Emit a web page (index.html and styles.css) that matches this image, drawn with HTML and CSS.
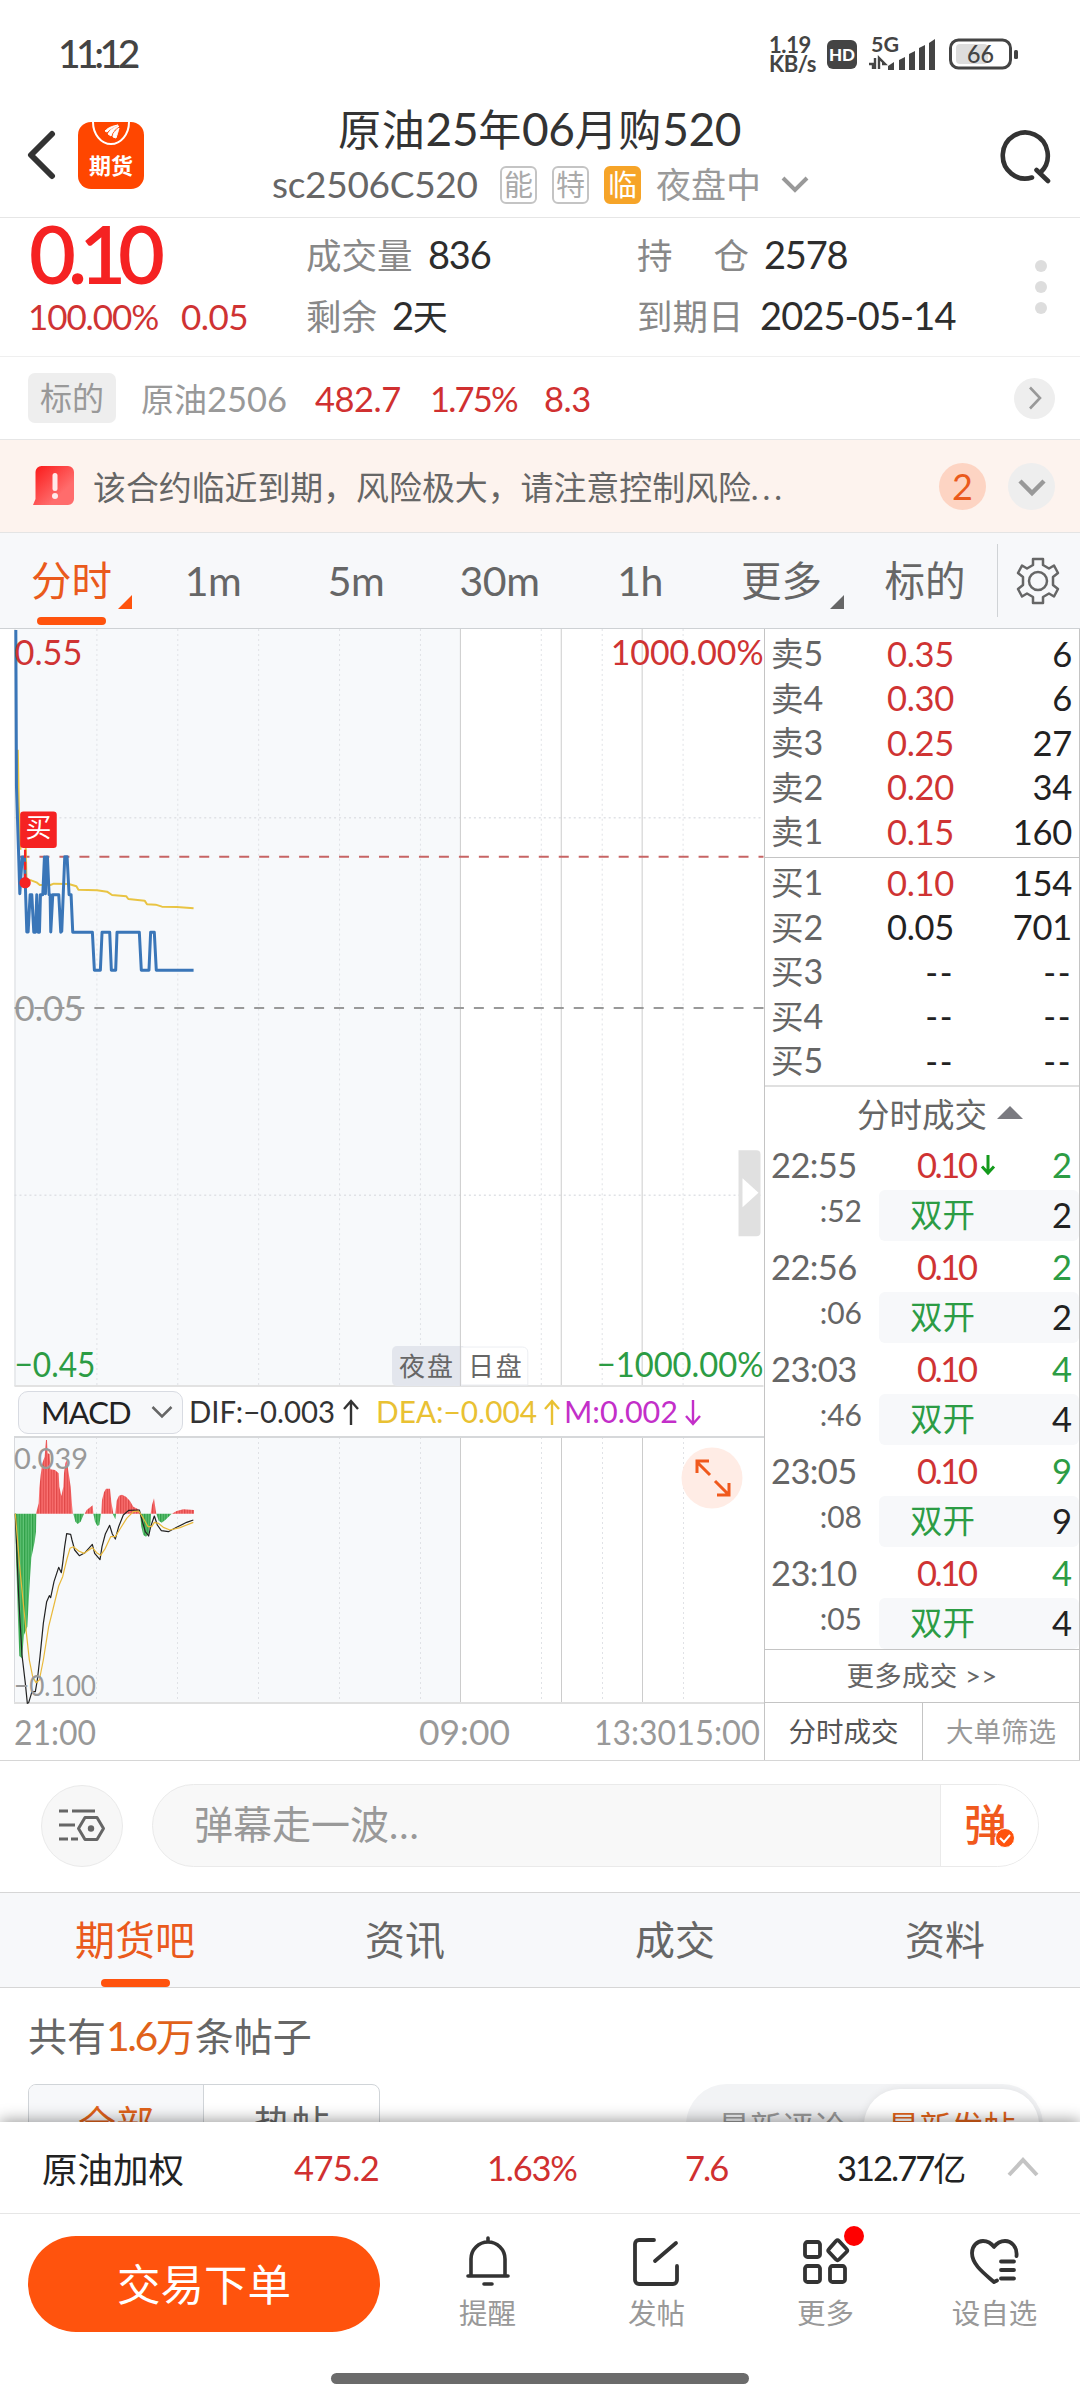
FILE: index.html
```html
<!DOCTYPE html>
<html lang="zh-CN">
<head>
<meta charset="utf-8">
<title>原油25年06月购520</title>
<link rel="stylesheet" href="styles.css">
</head>
<body>
<div class="app">

  <div class="status">
    <span class="clock">11:12</span>
    <span class="speed"><span>1.19</span><span>KB/s</span></span>
    <span class="hd">HD</span>
    <svg class="signal" width="68" height="36" viewBox="0 0 68 36">
      <text x="2" y="17" class="g5" textLength="28" lengthAdjust="spacingAndGlyphs">5G</text>
      <path d="M0 29h4v5M6 34V23M10 34V23l6 6h-3" fill="none" stroke="#444" stroke-width="2.4"/>
      <g fill="#444"><path d="M19 35v-4l6-4v8z"/><path d="M30 35V25l6-3v13z"/><path d="M40 35V19l6-3v19z"/><path d="M50 35V13l6-3v25z"/><path d="M60 35V8l6-4v31z"/></g>
    </svg>
    <svg class="battery" width="72" height="34" viewBox="0 0 72 34">
      <rect x="7" y="6" width="32" height="20" rx="4" fill="#ddd"/>
      <rect x="1.5" y="2" width="60" height="28" rx="8" fill="none" stroke="#444" stroke-width="3"/>
      <rect x="65" y="12" width="4" height="9" rx="1.5" fill="#444"/>
      <text x="18" y="24.500" class="batt" textLength="27" lengthAdjust="spacingAndGlyphs">66</text>
    </svg>
  </div>

  <header class="header">
    <svg class="back" width="30" height="50" viewBox="0 0 30 50"><path d="M25 4L4 25l21 21" fill="none" stroke="#333" stroke-width="6" stroke-linecap="round" stroke-linejoin="round"/></svg>
    <div class="logo">
      <svg width="38" height="24" viewBox="0 0 38 24"><path d="M1 0a18 22 0 0 0 36 0" fill="none" stroke="#fff" stroke-width="2"/><path d="M13 9c4-4 8-5 13-6-5 2-8 4-11 7zM16 12c2-4 6-7 11-8-4 3-7 6-8 10zM21 15c0-4 3-7 6-9-1 4-2 7-3 10z" fill="#fff" stroke="#fff"/></svg>
      <span>期货</span>
    </div>
    <div class="titles">
      <div class="title"><i>原油</i>25<i>年</i>06<i>月购</i>520</div>
      <div class="subtitle">
        <span class="code">sc2506C520</span>
        <span class="badge">能</span><span class="badge">特</span><span class="badge hot">临</span>
        <span class="phase">夜盘中</span>
        <svg width="28" height="18" viewBox="0 0 28 18"><path d="M2 2l12 12L26 2" fill="none" stroke="#999" stroke-width="4"/></svg>
      </div>
    </div>
    <svg class="search" width="54" height="54" viewBox="0 0 54 54"><path d="M33 47.500A22.500 23 0 1 1 42 42M37.500 40L49 51" fill="none" stroke="#333" stroke-width="4.600" stroke-linecap="round" stroke-linejoin="round"/></svg>
  </header>

  <section class="quote">
    <div class="last">
      <div class="price">0.10</div>
      <div class="change"><span>100.00%</span><span>0.05</span></div>
    </div>
    <dl class="stat s1"><dt>成交量</dt><dd>836</dd></dl>
    <dl class="stat s2"><dt class="wide"><span>持</span><span>仓</span></dt><dd>2578</dd></dl>
    <dl class="stat s3"><dt>剩余</dt><dd>2<i>天</i></dd></dl>
    <dl class="stat s4"><dt>到期日</dt><dd>2025-05-14</dd></dl>
    <div class="dots"><b></b><b></b><b></b></div>
  </section>

  <section class="underlying">
    <span class="tag">标的</span>
    <span class="uname">原油<em>2506</em></span>
    <span class="u u1">482.7</span><span class="u u2">1.75%</span><span class="u u3">8.3</span>
    <span class="go"><svg width="14" height="24" viewBox="0 0 14 24"><path d="M2 1.500l10 10.500L2 22.500" fill="none" stroke="#999" stroke-width="2.600"/></svg></span>
  </section>

  <section class="notice">
    <svg width="42" height="42" viewBox="0 0 42 42"><defs><linearGradient id="warn" x1="0" y1="0" x2="1" y2="1"><stop offset="0.100" stop-color="#fb2323"/><stop offset="0.700" stop-color="#ff6c6c"/></linearGradient></defs><path d="M9 1h26a6 6 0 0 1 6 6v27a6 6 0 0 1-6 6H0l2.500-6V7a6 6 0 0 1 6-6z" fill="url(#warn)"/><rect x="19.500" y="8" width="5" height="18" rx="2.500" fill="#ffeaea"/><circle cx="22" cy="31" r="3" fill="#ffeaea"/></svg>
    <span class="msg">该合约临近到期，风险极大，请注意控制风险<em>...</em></span>
    <span class="count">2</span>
    <span class="fold"><svg width="28" height="18" viewBox="0 0 28 18"><path d="M2 2l12 12L26 2" fill="none" stroke="#999" stroke-width="4.500"/></svg></span>
  </section>

  <nav class="periods">
    <span class="p p1 active">分时</span><span class="p p2">1m</span><span class="p p3">5m</span><span class="p p4">30m</span><span class="p p5">1h</span><span class="p p6">更多</span><span class="p p7">标的</span>
    <span class="gear"><svg width="44" height="48" viewBox="0 0 44 48"><g fill="none" stroke="#666" stroke-width="2.500" stroke-linejoin="round"><path d="M17 2h10v6l6 3.500 5-3 4 7.500-5 4v8l5 4-4 7.500-5-3-6 3.500v6H17v-6l-6-3.500-5 3L2 32l5-4v-8l-5-4 4-7.500 5 3L17 8z"/><circle cx="22" cy="24" r="9"/></g></svg></span>
  </nav>

  <main class="board">
    <div class="charts">
      <div class="plot">
        <svg width="764" height="760" viewBox="0 629 764 760">
          <rect x="14" y="629" width="446" height="758" fill="#f7f9fb"/>
          <g class="dot"><path d="M96.500 629v758M177.500 629v758M258.500 629v758M339.500 629v758M420.500 629v758M541.500 629v758M602.500 629v758M683.500 629v758"/><path d="M14 818H764M14 1196H764" stroke-width="1.600"/></g>
          <path d="M14.500 629v758" stroke="#d8dade"/>
          <path d="M460.500 629v758M561.500 629v758M642.500 629v758" stroke="#ccc"/>
          <path d="M14 1387H764" stroke="#e2e2e2" stroke-width="2"/>
          <path d="M19 857H764" stroke="#c76464" stroke-width="2" stroke-dasharray="10 10"/>
          <path d="M14 1008.500H764" stroke="#999" stroke-width="2" stroke-dasharray="10 10"/>
          <g transform="translate(0 620) scale(.33333)" fill="none" stroke-linejoin="round">
            <path d="M52 390L55 560 60 690M74 600L78 780 92 782 108 788 118 796 150 796 160 792 205 793 228 800 234 810 290 812 320 816 335 826 378 830 384 838 433 843 440 854 466 855 485 861 530 862 580 866" stroke="#e9c443" stroke-width="6"/>
            <path d="M46 30L48 500 54 690 58 822 65 712 72 712 79 937 83 937 89 825 94 825 100 938 105 938 109 825 113 938 117 938 120 825 127 825 132 712 135 822 137 712 141 712 146 825 149 825 151 937 157 825 175 825 181 938 184 935 193 711 200 711 206 825 212 825 217 938 276 938 282 1052 300 1052 305 938 328 938 333 1052 346 1052 350 938 417 938 423 1052 446 1052 451 938 462 938 468 1052 580 1052" stroke="#3a76b8" stroke-width="9"/>
            <path d="M74 690V780" stroke="#f52222" stroke-width="7" stroke-dasharray="24 12"/>
            <circle cx="74" cy="789" r="17" fill="#f52222"/>
            <rect x="59" y="575" width="110" height="110" rx="10" fill="#f52222"/>
          </g>
          <text x="25" y="837" class="buy">买</text>
          <text class="ax red" x="14" y="665" textLength="68" lengthAdjust="spacingAndGlyphs">0.55</text>
          <text class="ax red" x="611" y="665" textLength="153" lengthAdjust="spacingAndGlyphs">1000.00%</text>
          <text class="ax gray" x="14" y="1021.500" textLength="69" lengthAdjust="spacingAndGlyphs">0.05</text>
          <rect x="392" y="1347" width="74" height="40" rx="5" fill="#e3e6ed"/>
          <path d="M461 1348h62a5 5 0 0 1 5 5v33h-67z" fill="#fff" stroke="#eceef2"/><path d="M460.500 1347v40" stroke="#ccc"/>
          <text class="ax green" x="14" y="1378.500" textLength="81" lengthAdjust="spacingAndGlyphs">−0.45</text>
          <text class="ax green" x="597" y="1378.500" textLength="167" lengthAdjust="spacingAndGlyphs">−1000.00%</text>
          <text class="sess" x="399" y="1377" textLength="54">夜盘</text>
          <text class="sess" x="468" y="1377" textLength="54">日盘</text>
          <path d="M739 1151h18q4 0 4 4v78q0 4-4 4h-18z" fill="#e0e0e0"/><path d="M743 1179l16 14.500-16 14.500z" fill="#fff"/>
        </svg>
      </div>
      <div class="indicator">
        <span class="macd">MACD<svg width="22" height="14" viewBox="0 0 22 14"><path d="M1.500 2L11 11.500 20.500 2" fill="none" stroke="#666" stroke-width="2.500"/></svg></span>
        <svg class="vals" width="520" height="48" viewBox="188 1388 520 48">
          <g fill="#333" stroke="#333"><text x="189" y="1423" textLength="146" lengthAdjust="spacingAndGlyphs">DIF:−0.003</text><path d="M351 1425v-24M344 1409l7-8 7 8"/></g>
          <g fill="#e9c133" stroke="#e9c133"><text x="376" y="1423" textLength="161" lengthAdjust="spacingAndGlyphs">DEA:−0.004</text><path d="M552 1425v-24M545 1409l7-8 7 8"/></g>
          <g fill="#c32fc9" stroke="#c32fc9"><text x="564" y="1423" textLength="114" lengthAdjust="spacingAndGlyphs">M:0.002</text><path d="M693 1400v24M686 1416l7 8 7-8"/></g>
        </svg>
      </div>
      <div class="plot">
        <svg width="764" height="268" viewBox="0 1436 764 268">
          <defs>
            <pattern id="up" width="8" height="8" patternUnits="userSpaceOnUse"><rect width="8" height="8" fill="#fb7474"/><rect width="4" height="8" fill="#e04848"/></pattern>
            <pattern id="dn" width="8" height="8" patternUnits="userSpaceOnUse"><rect width="8" height="8" fill="#62c476"/><rect width="4" height="8" fill="#2fa048"/></pattern>
          </defs>
          <rect x="14" y="1437" width="446" height="266" fill="#f7f9fb"/>
          <path class="dot" d="M96.500 1437v266M177.500 1437v266M258.500 1437v266M339.500 1437v266M420.500 1437v266M541.500 1437v266M602.500 1437v266M683.500 1437v266"/>
          <path d="M14.500 1437v266" stroke="#d8dade"/>
          <path d="M460.500 1437v266M561.500 1437v266M642.500 1437v266" stroke="#ccc"/>
          <path d="M14 1437H764" stroke="#d6d8da" stroke-width="2"/><path d="M14 1703H764" stroke="#e0e0e0" stroke-width="2"/>
          <g transform="translate(0 1330) scale(.33333)">
            <path fill="url(#up)" d="M108 551L116 520 118 475 122 435 127 400 134 380 138 330 141 330 143 370 149 372 151 418 165 420 176 430 178 470 184 498 190 470 192 430 196 400 200 390 206 430 212 470 218 551zM254 551L260 540 278 526 280 551zM304 551L306 510 312 487 318 476 330 476 334 516 340 551zM346 551L350 512 357 497 366 494 378 500 390 513 400 530 415 538 422 551zM452 551L456 525 462 505 467 540 469 551zM516 551L530 543 550 538 582 540 582 551z"/>
            <path fill="url(#dn)" d="M44 551L50 735 54 870 58 978 66 985 72 915 82 890 86 815 90 745 94 683 100 655 104 635 108 605 109 551zM220 551L226 575 233 582 242 575 252 551zM280 551L285 575 292 588 298 585 303 551zM338 551L346 568 348 551zM420 551L424 590 430 615 438 620 446 612 452 575 453 551zM469 551L476 572 485 578 496 570 515 551z"/>
            <g fill="none" stroke-width="3.600" stroke-linejoin="round">
              <path stroke="#222" d="M46 551L56 800 66 975 76 1060 82 1120 86 1118 96 1085 106 1085 112 1050 120 980 130 880 140 815 148 797 152 803 162 755 176 712 184 728 188 700 194 650 200 611 212 613 216 630 224 660 238 677 255 668 277 643 284 670 300 689 306 650 316 612 329 586 337 612 346 627 356 590 370 555 386 541 418 540 426 570 436 605 446 618 452 590 463 558 472 585 484 602 505 605 530 592 560 577 580 570"/>
              <path stroke="#e9b93a" d="M46 551L60 720 76 880 88 990 98 1040 108 1058 118 1050 130 990 146 890 162 825 176 768 188 740 200 690 210 655 220 650 236 663 252 670 277 653 290 668 302 676 316 655 332 620 346 620 360 597 380 565 400 545 416 543 430 565 444 590 455 590 463 577 475 580 490 592 510 600 540 593 580 577"/>
            </g>
          </g>
          <text class="ax small gray" x="14" y="1469" textLength="74" lengthAdjust="spacingAndGlyphs">0.039</text>
          <text class="ax small gray" x="14" y="1696" textLength="82" lengthAdjust="spacingAndGlyphs">−0.100</text>
          <circle cx="712" cy="1478" r="30.500" fill="#ffece5"/>
          <path d="M710 1475L697 1462M709 1461h-12v12M715 1481l14 14M717 1495h12v-12" fill="none" stroke="#f0591d" stroke-width="3"/>
        </svg>
      </div>
      <svg class="times" width="764" height="56" viewBox="0 1704 764 56">
        <text class="ax gray" x="14" y="1744.500" textLength="82" lengthAdjust="spacingAndGlyphs">21:00</text>
        <text class="ax gray" x="419" y="1744.500" textLength="91" lengthAdjust="spacingAndGlyphs">09:00</text>
        <text class="ax gray" x="594" y="1744.500" textLength="82" lengthAdjust="spacingAndGlyphs">13:30</text>
        <text class="ax gray" x="676" y="1744.500" textLength="84" lengthAdjust="spacingAndGlyphs">15:00</text>
      </svg>
    </div>

    <aside class="depth">
      <div class="book asks">
        <div class="lv"><span>卖<em>5</em></span><b class="up">0.35</b><b>6</b></div>
        <div class="lv"><span>卖<em>4</em></span><b class="up">0.30</b><b>6</b></div>
        <div class="lv"><span>卖<em>3</em></span><b class="up">0.25</b><b>27</b></div>
        <div class="lv"><span>卖<em>2</em></span><b class="up">0.20</b><b>34</b></div>
        <div class="lv"><span>卖<em>1</em></span><b class="up">0.15</b><b>160</b></div>
      </div>
      <div class="book bids">
        <div class="lv"><span>买<em>1</em></span><b class="up">0.10</b><b>154</b></div>
        <div class="lv"><span>买<em>2</em></span><b>0.05</b><b>701</b></div>
        <div class="lv"><span>买<em>3</em></span><b class="none">--</b><b class="none">--</b></div>
        <div class="lv"><span>买<em>4</em></span><b class="none">--</b><b class="none">--</b></div>
        <div class="lv"><span>买<em>5</em></span><b class="none">--</b><b class="none">--</b></div>
      </div>
      <div class="ticks-title">分时成交<i class="tri-up"></i></div>
      <div class="ticks">
        <div class="tick"><span class="t">22:55</span><span class="px">0.10<svg width="16" height="22" viewBox="0 0 16 22"><path d="M8 1v18M2 12.500l6 6.500 6-6.500" fill="none" stroke="#149a1c" stroke-width="3"/></svg></span><span class="v dn">2</span></div>
        <div class="tick sub"><span class="t">:52</span><span class="kind"><i>双开</i><span class="v">2</span></span></div>
        <div class="tick"><span class="t">22:56</span><span class="px">0.10</span><span class="v dn">2</span></div>
        <div class="tick sub"><span class="t">:06</span><span class="kind"><i>双开</i><span class="v">2</span></span></div>
        <div class="tick"><span class="t">23:03</span><span class="px">0.10</span><span class="v dn">4</span></div>
        <div class="tick sub"><span class="t">:46</span><span class="kind"><i>双开</i><span class="v">4</span></span></div>
        <div class="tick"><span class="t">23:05</span><span class="px">0.10</span><span class="v dn">9</span></div>
        <div class="tick sub"><span class="t">:08</span><span class="kind"><i>双开</i><span class="v">9</span></span></div>
        <div class="tick"><span class="t">23:10</span><span class="px">0.10</span><span class="v dn">4</span></div>
        <div class="tick sub"><span class="t">:05</span><span class="kind"><i>双开</i><span class="v">4</span></span></div>
      </div>
      <div class="more">更多成交 &gt;&gt;</div>
      <div class="switch"><span class="on">分时成交</span><span>大单筛选</span></div>
    </aside>
  </main>

  <section class="danmu">
    <span class="setting"><svg width="48" height="38" viewBox="0 0 48 38"><g fill="none" stroke="#666" stroke-width="3"><path d="M1 4h9M14 4h23M1 18h16M1 32h9M13 32h7"/><path d="M27 10.500h12l6.500 11-6.500 11H27l-6.500-11z" stroke-linejoin="round"/></g><circle cx="33" cy="21.500" r="3.200" fill="#666"/></svg></span>
    <div class="input"><span class="ph">弹幕走一波<em>...</em></span><span class="send">弹<svg width="20" height="20" viewBox="0 0 20 20"><circle cx="10" cy="10" r="9.500" fill="#ff530d" stroke="#fff"/><path d="M5 10l4 4 6-7" fill="none" stroke="#fff" stroke-width="2"/></svg></span></div>
  </section>

  <nav class="sections"><span class="active">期货吧</span><span>资讯</span><span>成交</span><span>资料</span></nav>

  <section class="posts">
    <div class="total">共有<b><em>1.6</em>万</b>条帖子</div>
    <div class="filters">
      <div class="seg"><span class="on">全部</span><span>热帖</span></div>
      <div class="pill"><span>最新评论</span><span class="on">最新发帖</span></div>
    </div>
  </section>

  <footer class="sheet">
    <div class="index">
      <span class="iname">原油加权</span><span class="i i1">475.2</span><span class="i i2">1.63%</span><span class="i i3">7.6</span><span class="i i4">312.77<i>亿</i></span>
      <svg width="32" height="22" viewBox="0 0 32 22"><path d="M2 19L16 4l14 15" fill="none" stroke="#c4c4c4" stroke-width="4"/></svg>
    </div>
    <div class="actions">
      <button class="trade">交易下单</button>
      <div class="act"><svg width="50" height="52" viewBox="0 0 50 52"><g fill="none" stroke="#333" stroke-width="3.600" stroke-linecap="round"><path d="M25 2v4M8 40V23a17 17 0 0 1 34 0v17M5 40h40M21 48h8"/></g></svg><span>提醒</span></div>
      <div class="act"><svg width="50" height="52" viewBox="0 0 50 52"><path d="M22 4H7a4 4 0 0 0-4 4v36a4 4 0 0 0 4 4h34a4 4 0 0 0 4-4V30M23 25L44 7" fill="none" stroke="#333" stroke-width="3.800" stroke-linecap="round"/></svg><span>发帖</span></div>
      <div class="act"><svg width="50" height="52" viewBox="0 0 50 52"><g fill="none" stroke="#333" stroke-width="3.800" stroke-linejoin="round"><rect x="4" y="6" width="15" height="15" rx="2.500"/><rect x="4" y="30" width="15" height="16" rx="2.500"/><rect x="29" y="30" width="15" height="16" rx="2.500"/><path d="M35 5q1.500-1.500 3 0l7.500 8q1.500 1.500 0 3L38 23.500q-1.500 1.500-3 0L28 16q-1.500-1.500 0-3z"/></g></svg><b class="reddot"></b><span>更多</span></div>
      <div class="act"><svg width="50" height="52" viewBox="0 0 50 52"><g fill="none" stroke="#333" stroke-width="3.800" stroke-linecap="round" stroke-linejoin="round"><path d="M46.500 20c1-9-5-15-11.500-15-5 0-8.500 2.500-11 6-2.500-3.500-6-6-11-6C7 5 2 10 2 17c0 12 13 21 22 29l3-1.500M31 25.500h13M31 34h13M31 42.500h13"/></g></svg><span>设自选</span></div>
    </div>
    <div class="home"></div>
  </footer>
</div>
</body>
</html>
```
FILE: styles.css
```css
* { box-sizing: border-box; margin: 0; padding: 0; }
body { background: #fff; font-family: Lato, "Noto Sans CJK SC", sans-serif; color: #333; }
i, em { font-style: normal; }
b { font-weight: 400; }
svg { display: block; flex: none; }
.app { width: 1080px; height: 2400px; overflow: hidden; display: flex; flex-direction: column; background: #fff; }
.app > * { flex: none; }

/* status bar */
.status { height: 110px; padding: 0 59px 0 58px; display: flex; align-items: flex-start; color: #444; }
.clock { font-size: 39px; line-height: 46px; margin-top: 30px; font-weight: 500; letter-spacing: -4.500px; margin-right: auto; }
.speed { width: 57px; margin-top: 35px; display: flex; flex-direction: column; font-size: 22px; line-height: 19px; font-weight: 700; letter-spacing: -.4px; }
.hd { width: 30px; height: 29px; margin: 40px 12px 0 1px; border-radius: 6px; background: #444; color: #fff; font-size: 17px; line-height: 29px; font-weight: 900; text-align: center; }
.signal { margin-top: 35px; margin-right: 12px; }
.battery { margin-top: 38px; }
.g5 { font-size: 21px; font-weight: 700; fill: #444; }
.batt { font-size: 24px; font-weight: 500; fill: #444; }

/* header */
.header { height: 108px; border-bottom: 1px solid #e6e6e6; display: flex; align-items: flex-start; padding: 0 27px 0 27px; }
.back { margin-top: 20px; }
.logo { width: 66px; height: 67px; margin: 12px 0 0 21px; border-radius: 13px; background: #ff4600; color: #fff; display: flex; flex-direction: column; align-items: center; }
.logo span { font-size: 22px; line-height: 26px; font-weight: 700; margin-top: 7px; }
.titles { flex: 1; padding-left: 128px; }
.title { font-size: 46px; line-height: 56px; margin-top: -9px; margin-left: 66px; white-space: nowrap; letter-spacing: -.4px; }
.title i { font-size: 43px; letter-spacing: .8px; }
.subtitle { display: flex; align-items: center; height: 50px; margin-top: 2px; }
.code { font-size: 37px; line-height: 46px; width: 228px; color: #666; letter-spacing: -.3px; margin-top: -2px; }
.badge { width: 37px; height: 38px; margin-right: 15px; border: 2px solid #c4c4c4; border-radius: 6px; font-size: 29px; line-height: 33px; text-align: center; color: #aaa; display: flex; justify-content: center; }
.badge.hot { background: #f6a428; border-color: #f6a428; color: #fff; }
.phase { font-size: 35px; line-height: 46px; width: 125px; color: #999; margin-top: -2px; }
.search { margin-top: 20px; }

/* quote */
.quote { height: 139px; border-bottom: 1px solid #efefef; display: grid; grid-template: 61px 61px 1fr / 306px 331px 380px 1fr; padding-top: 5px; }
.last { grid-row: 1 / 3; padding-left: 29px; }
.price { font-size: 81px; line-height: 60px; font-weight: 600; color: #f52222; letter-spacing: -8px; }
.change { display: flex; font-size: 35px; line-height: 42px; color: #cf3333; margin-top: 12px; margin-left: -1px; }
.change span:first-child { width: 153px; letter-spacing: -1.1px; }
.change span:last-child { letter-spacing: -.5px; }
.stat { display: flex; align-items: center; font-size: 35px; }
.s1 { grid-area: 1 / 2; } .s2 { grid-area: 1 / 3; } .s3 { grid-area: 2 / 2; } .s4 { grid-area: 2 / 3; }
.stat dt { color: #888; font-size: 35.500px; }
.stat dd { color: #2d2d2d; font-size: 38px; letter-spacing: -1.200px; }
.stat dd i { font-size: 35px; }
.s1 dt { width: 122px; } .s2 dt, .s4 dt { width: 127px; } .s4 dt { width: 123px; } .s3 dt { width: 86px; }
.s4 dd { letter-spacing: -.9px; }
.stat .wide { display: flex; justify-content: space-between; padding-right: 15px; }
.dots { grid-area: 1 / 4 / 3 / 5; display: flex; flex-direction: column; gap: 9px; padding: 37px 0 0 18px; }
.dots b { width: 12px; height: 12px; border-radius: 50%; background: #ddd; }

/* underlying */
.underlying { height: 83px; display: flex; align-items: center; padding: 0 25px 0 28px; border-bottom: 1px solid #e6e6e6; }
.tag { width: 88px; height: 50px; border-radius: 7px; background: #eee; color: #999; font-size: 32px; line-height: 50px; text-align: center; margin-right: 25px; }
.uname { font-size: 33px; color: #999; width: 174px; white-space: nowrap; }
.uname em { font-size: 34.500px; }
.u { font-size: 34.500px; color: #d03030; letter-spacing: -.5px; }
.u1 { width: 115px; } .u2 { width: 114px; letter-spacing: -1.800px; }
.go { width: 41px; height: 41px; border-radius: 50%; background: #eee; display: flex; align-items: center; justify-content: center; margin-left: auto; }

/* notice */
.notice { height: 93px; background: #fdf3ee; border-bottom: 1px solid #e4e4e4; display: flex; align-items: center; padding: 0 25px 0 33px; }
.msg { margin-left: 18px; font-size: 32.900px; color: #666; margin-right: auto; margin-top: -2px; }
.msg em { letter-spacing: 4px; }
.count { width: 47px; height: 47px; border-radius: 50%; background: #fdd4c3; color: #ea5a1c; font-size: 36px; line-height: 47px; text-align: center; margin-right: 22px; }
.fold { width: 47px; height: 47px; border-radius: 50%; background: #eee; display: flex; align-items: center; justify-content: center; padding-top: 3px; }

/* period tabs */
.periods { height: 96px; background: #f7f8fa; border-bottom: 1px solid #ced1d4; display: grid; grid-template-columns: 143px 140px 146px 141px 140px 143px 144px 1fr; color: #666; font-size: 41px; line-height: 96px; }
.p { position: relative; text-align: center; }
.p1, .p6, .p7 { font-size: 40.500px; }
.p2, .p3, .p4, .p5 { letter-spacing: -.5px; }
.active { color: #ea5a1c; }
.p1.active::before { content: ""; position: absolute; left: 37px; top: 84px; width: 69px; height: 8px; border-radius: 4px; background: #ff530d; }
.p1::after, .p6::after { content: ""; position: absolute; left: 118px; top: 62px; border-left: 14px solid transparent; border-bottom: 14px solid #ff530d; }
.p6::after { border-bottom-color: #666; left: 120px; }
.gear { border-left: 1px solid #d0d3d6; height: 73px; margin-top: 11px; display: flex; align-items: center; justify-content: center; padding-right: 2px; }

/* chart board */
.board { display: grid; grid-template-columns: 764px 316px; height: 1132px; border-bottom: 1px solid #d6d6d6; }
.ax { font-size: 34px; }
.small { font-size: 29px; }
.dot { stroke: #e0e2e6; stroke-dasharray: 2 3; fill: none; }
.red { fill: #cf3333; } .green { fill: #2c9c44; } .gray { fill: #999; }
.buy { font-size: 26px; fill: #fff; }
.sess { font-size: 26px; fill: #666; }
.plot:first-child svg { height: 759px; }
.indicator { height: 48px; display: flex; align-items: center; padding-left: 18px; }
.macd { width: 165px; height: 43px; border: 1px solid #d8dbe2; border-radius: 10px; background: #f7f8fa; display: flex; align-items: center; justify-content: space-between; padding: 0 9px 0 22px; font-size: 31px; letter-spacing: -1px; color: #222; margin-right: 5px; }
.vals text { font-size: 31px; stroke: none; }
.vals path { fill: none; stroke-width: 2.400; }

/* depth panel */
.depth { border-left: 1px solid #c4c4c4; border-right: 1px solid #c4c4c4; display: flex; flex-direction: column; }
.book { padding: 2px 7px 0 6px; }
.asks { height: 229px; border-bottom: 1px solid #c4c4c4; }
.bids { height: 229px; border-bottom: 2px solid #e0e0e0; }
.lv { height: 44.500px; display: grid; grid-template-columns: 65px 118px 1fr; align-items: center; line-height: 44px; color: #666; font-size: 32.500px; }
.lv em { font-size: 34px; }
.lv b { font-size: 34.500px; text-align: right; color: #222; letter-spacing: -.3px; }
.lv .none { letter-spacing: 1.500px; }
.lv .up, .px { color: #cf3333; }
.ticks-title { height: 50px; margin-bottom: 2px; display: flex; align-items: center; justify-content: center; gap: 10px; font-size: 32.500px; color: #666; padding-left: 36px; }
.tri-up { border: 13px solid transparent; border-top: 0; border-bottom: 13px solid #7a7a80; }
.tick { height: 51px; display: grid; grid-template-columns: 108px 1fr 30px; align-items: center; line-height: 50px; font-size: 34.500px; padding: 0 7px 0 6px; }
.t { color: #666; letter-spacing: -.6px; }
.px { display: flex; align-items: center; padding-left: 38px; letter-spacing: -2.400px; }
.px svg { margin-left: 4px; }
.v { text-align: right; color: #222; }
.v.dn, .kind i { color: #2c9c44; }
.sub { grid-template-columns: 108px 1fr; padding-right: 0; }
.sub .t { font-size: 30px; text-align: right; padding-right: 17px; margin-top: -12px; letter-spacing: 0; }
.kind { height: 51px; background: #f7f8fa; border-radius: 6px; display: flex; justify-content: space-between; padding: 0 7px 0 31px; }
.kind i { font-size: 32.500px; }
.more { height: 54px; border-top: 1px solid #c4c4c4; border-bottom: 1px solid #c4c4c4; font-size: 27.500px; line-height: 52px; text-align: center; color: #666; letter-spacing: .3px; }
.switch { flex: 1; display: grid; grid-template-columns: 158px 1fr; font-size: 27.500px; line-height: 57px; text-align: center; color: #999; }
.switch .on { border-right: 1px solid #c4c4c4; color: #555; }

/* danmu */
.danmu { height: 132px; border-bottom: 1px solid #d6d6d6; display: flex; align-items: center; padding: 0 41px 2px; gap: 29px; }
.setting { width: 82px; height: 82px; border-radius: 50%; background: #f7f7f7; border: 1px solid #eaeaea; display: flex; align-items: center; justify-content: center; }
.input { flex: 1; height: 83px; border-radius: 42px; border: 1px solid #eaeaea; background: #f8f8f8; overflow: hidden; display: flex; }
.ph { flex: 1; padding-left: 41px; font-size: 39px; line-height: 79px; color: #999; }
.ph em { letter-spacing: 1px; }
.send { position: relative; width: 98px; border-left: 1px solid #eaeaea; background: #fff; color: #f0591d; font-size: 43px; line-height: 79px; font-weight: 500; padding-left: 23px; }
.send svg { position: absolute; left: 54px; top: 43px; }

/* section tabs */
.sections { height: 95px; background: #f7f8fa; border-bottom: 1px solid #d6d6d6; display: grid; grid-template-columns: repeat(4, 1fr); font-size: 40px; line-height: 95px; color: #666; text-align: center; }
.sections .active { position: relative; color: #ea5a1c; }
.sections .active::before { content: ""; position: absolute; left: 101px; bottom: 1px; width: 69px; height: 8px; border-radius: 4px; background: #ff530d; }

/* posts */
.posts { height: 134px; overflow: hidden; padding: 0 37px 0 28px; }
.total { font-size: 39px; line-height: 95px; height: 96px; color: #666; }
.total b { color: #e0621a; }
.total em { font-size: 41px; letter-spacing: -2.500px; }
.filters { display: flex; justify-content: space-between; }
.seg { width: 352px; height: 80px; border: 1px solid #d0d4d8; border-radius: 8px; display: grid; grid-template-columns: 1fr 1fr; text-align: center; font-size: 38px; line-height: 77px; color: #666; overflow: hidden; }
.seg .on { color: #e0621a; background: #f7f8fa; border-right: 1px solid #d0d4d8; }
.pill { width: 357px; height: 82px; border-radius: 41px; background: #f2f3f5; display: flex; font-size: 32px; line-height: 75px; color: #999; padding: 5px 4px 5px 32px; justify-content: space-between; }
.pill .on { width: 175px; background: #fff; border-radius: 36px; color: #e0621a; text-align: center; box-shadow: 0 0 8px rgba(0, 0, 0, .08); }

/* bottom sheet */
.sheet { position: relative; height: 278px; background: #fff; box-shadow: 0 -2px 14px rgba(0, 0, 0, .38); }
.index { height: 92px; border-bottom: 1px solid #e6e6e6; display: grid; grid-template-columns: 252px 193px 198px 152px 170px 1fr; align-items: center; padding: 0 0 1px 42px; font-size: 34.500px; }
.iname { font-size: 35.500px; color: #222; }
.i { color: #d03030; letter-spacing: -.6px; }
.i2 { letter-spacing: -1.200px; } .i3 { letter-spacing: -2px; }
.i4 { color: #222; letter-spacing: -2px; white-space: nowrap; }
.i4 i { font-size: 33px; }
.actions { display: grid; grid-template-columns: 352px 23px 169px 169px 169px 169px; padding: 22px 0 0 28px; align-items: start; }
.trade { height: 96px; border: 0; border-radius: 48px; background: #ff530d; color: #fff; font: 43.500px/94px Lato, "Noto Sans CJK SC", sans-serif; grid-column: 1; }
.act { position: relative; display: flex; flex-direction: column; align-items: center; font-size: 28.500px; line-height: 34px; color: #999; }
.act:nth-child(2) { grid-column: 3; }
.act span { margin-top: 8px; }
.reddot { position: absolute; left: 103px; top: -10px; width: 20px; height: 20px; border-radius: 50%; background: #f00; }
.home { position: absolute; left: 331px; top: 251px; width: 418px; height: 11px; border-radius: 6px; background: #6b6b6b; }
```
